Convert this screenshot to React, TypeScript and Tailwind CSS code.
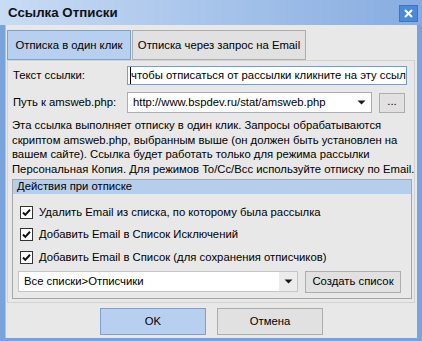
import React from "react";

function Arrow() {
  return (
    <svg width="9" height="5" viewBox="0 0 9 5">
      <path d="M0.5 0.5h8L4.5 4.5z" fill="#1a1a1a" />
    </svg>
  );
}

function Check() {
  return (
    <span className="flex h-[13px] w-[13px] shrink-0 items-center justify-center border border-[#333] bg-white">
      <svg width="11" height="11" viewBox="0 0 11 11">
        <path d="M2 5.5l2.3 2.4L9 2.8" fill="none" stroke="#111" strokeWidth="2" />
      </svg>
    </span>
  );
}

const opts = [
  "Удалить Email из списка, по которому была рассылка",
  "Добавить Email в Список Исключений",
  "Добавить Email в Список (для сохранения отписчиков)",
];

export default function App() {
  return (
    <div className="flex h-[341px] w-[422px] flex-col whitespace-nowrap bg-[#79a3dc] font-['Liberation_Sans',Arial,sans-serif] text-[11.3px] text-black">
      <div className="flex h-[25px] shrink-0 items-center justify-between bg-gradient-to-r from-[#c9dcf5] to-[#86ace0] pl-[8px] pr-[4px]">
        <span className="text-[13.3px] font-bold text-[#111]">Ссылка Отписки</span>
        <div className="mt-[2px] flex h-[17px] w-[19px] items-center justify-center border border-[#3f74c4] bg-[#4c89da]">
          <svg width="9" height="9" viewBox="0 0 9 9">
            <path d="M1 1l7 7M8 1L1 8" stroke="#fff" strokeWidth="2" />
          </svg>
        </div>
      </div>

      <div className="mx-[5px] mb-[3px] flex flex-1 flex-col border-l border-[#a8c3e8] bg-[#e8e8e8] pt-[5px]">
        <div className="ml-[1px] flex h-[30px] gap-[1px]">
          <div className="flex w-[124px] items-center justify-center border border-[#7f9fcf] bg-[#b8d0ef]">
            Отписка в один клик
          </div>
          <div className="flex w-[174px] items-center justify-center border border-[#adadad] bg-[#e1e1e1]">
            Отписка через запрос на Email
          </div>
        </div>

        <div className="ml-[1px] mr-[2px] flex h-[243px] flex-col border border-[#d2d2d2] pt-[5px]">
          <div className="flex items-center">
            <span className="w-[119px] pl-[5px]">Текст ссылки:</span>
            <div className="flex h-[19px] w-[280px] items-center overflow-hidden border border-[#6c9fe0] bg-white pl-[2px]">
              <span className="border-l border-black">чтобы отписаться от рассылки кликните на эту ссылку</span>
            </div>
          </div>

          <div className="mt-[7px] flex items-center">
            <span className="w-[119px] pl-[5px]">Путь к amsweb.php:</span>
            <div className="flex h-[21px] w-[245px] items-center justify-between border border-[#abadb3] bg-white pl-[5px] pr-[5px]">
              <span>http://www.bspdev.ru/stat/amsweb.php</span>
              <Arrow />
            </div>
            <div className="ml-[7px] flex h-[20px] w-[26px] items-center justify-center border border-[#adadad] bg-[#e1e1e1] pb-[3px]">
              ...
            </div>
          </div>

          <p className="ml-[4px] mt-[5px] leading-[14.7px]">
            Эта ссылка выполняет отписку в один клик. Запросы обрабатываются
            <br />
            скриптом amsweb.php, выбранным выше (он должен быть установлен на
            <br />
            вашем сайте). Ссылка будет работать только для режима рассылки
            <br />
            Персональная Копия. Для режимов To/Cc/Bcc используйте отписку по Email.
          </p>

          <div className="ml-[4px] mt-[2px] w-[400px] border border-[#a6a6a6] pb-[5px]">
            <div className="flex h-[14px] items-center bg-[#b6ceed] pl-[4px]">Действия при отписке</div>
            <div className="flex flex-col gap-[9.5px] pl-[7px] pt-[12px]">
              {opts.map((o) => (
                <label key={o} className="flex h-[13px] items-center gap-[6px]">
                  <Check />
                  <span>{o}</span>
                </label>
              ))}
            </div>
            <div className="mt-[7px] flex items-center pl-[5px]">
              <div className="flex h-[21px] w-[280px] items-center justify-between border border-[#c6c6c6] bg-white pl-[5px]">
                <span>Все списки&gt;Отписчики</span>
                <span className="flex h-full w-[18px] items-center justify-center bg-[#ececec]">
                  <Arrow />
                </span>
              </div>
              <div className="ml-[7px] flex h-[22px] w-[96px] items-center justify-center border border-[#adadad] bg-[#e1e1e1]">
                Создать список
              </div>
            </div>
          </div>
        </div>

        <div className="mt-[5px] flex justify-center gap-[11px]">
          <div className="flex h-[27px] w-[106px] items-center justify-center border border-[#7f9fcf] bg-[#b8d0ef]">
            OK
          </div>
          <div className="flex h-[27px] w-[106px] items-center justify-center border border-[#adadad] bg-[#e1e1e1]">
            Отмена
          </div>
        </div>
      </div>
    </div>
  );
}
